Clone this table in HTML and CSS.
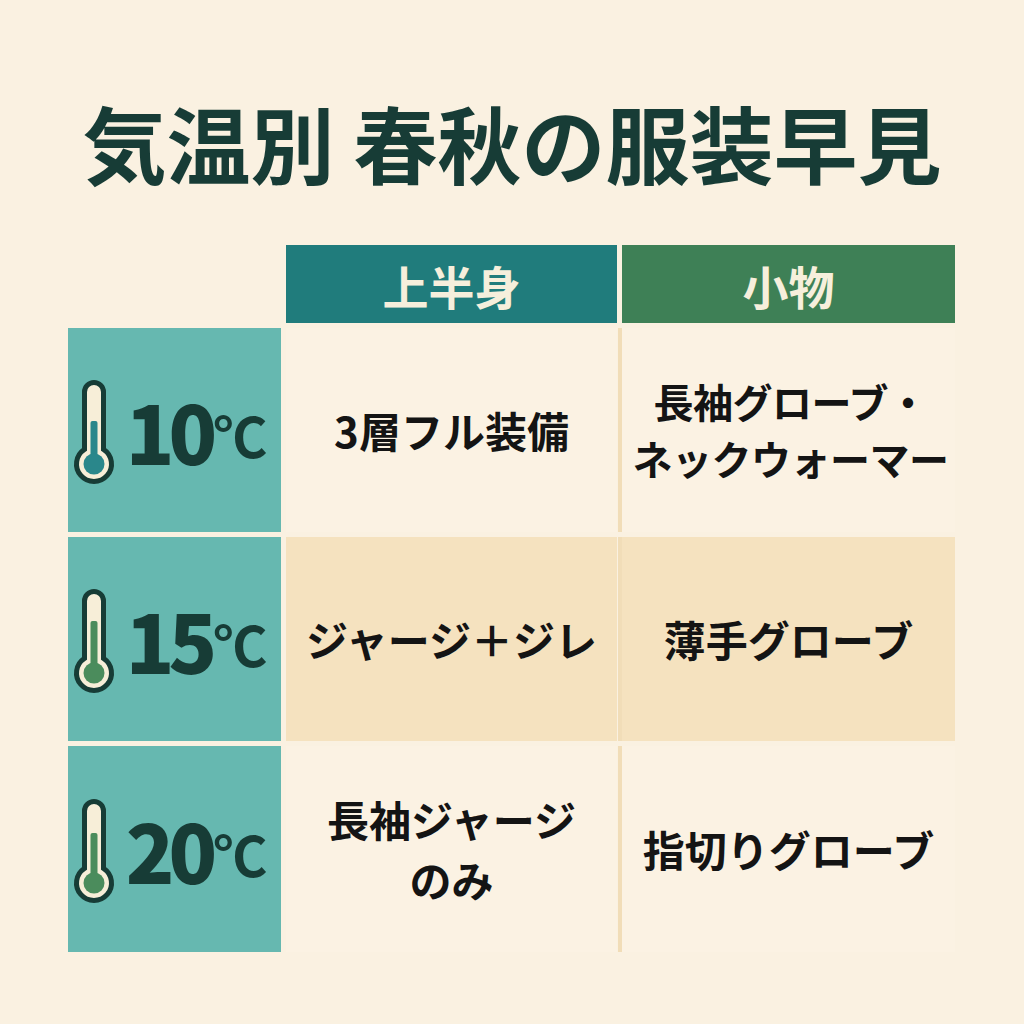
FILE: index.html
```html
<!DOCTYPE html>
<html lang="ja">
<head>
<meta charset="utf-8">
<title>気温別 春秋の服装早見</title>
<link rel="stylesheet" href="styles.css">
</head>
<body>
<main class="page">
  <h1 class="title">気温別 春秋の服装早見</h1>
  <div class="table">
    <div class="corner"></div>
    <div class="head head-teal">上半身</div>
    <div class="head head-green">小物</div>

    <div class="temp">
      <svg class="thermo" viewBox="0 0 44 104" width="44" height="104">
        <path class="thermo-body" d="M12.5,69.3 V12 A9.5,9.5 0 0 1 31.5,12 V69.3 A17.5,17.5 0 1 1 12.5,69.3 Z"/>
        <rect class="fill-teal" x="18.5" y="41" width="7" height="44" rx="2"/>
        <circle class="fill-teal" cx="22" cy="84" r="10.5"/>
      </svg>
      <span class="deg">10</span><span class="unit">℃</span>
    </div>
    <div class="cell">3層フル装備</div>
    <div class="cell cell-last cell-small">長袖グローブ・<br>ネックウォーマー</div>

    <div class="temp">
      <svg class="thermo" viewBox="0 0 44 104" width="44" height="104">
        <path class="thermo-body" d="M12.5,69.3 V12 A9.5,9.5 0 0 1 31.5,12 V69.3 A17.5,17.5 0 1 1 12.5,69.3 Z"/>
        <rect class="fill-green" x="18.5" y="32" width="7" height="53" rx="2"/>
        <circle class="fill-green" cx="22" cy="84" r="10.5"/>
      </svg>
      <span class="deg">15</span><span class="unit">℃</span>
    </div>
    <div class="cell cell-tan">ジャージ＋ジレ</div>
    <div class="cell cell-tan cell-last">薄手グローブ</div>

    <div class="temp">
      <svg class="thermo" viewBox="0 0 44 104" width="44" height="104">
        <path class="thermo-body" d="M12.5,69.3 V12 A9.5,9.5 0 0 1 31.5,12 V69.3 A17.5,17.5 0 1 1 12.5,69.3 Z"/>
        <rect class="fill-green" x="18.5" y="34" width="7" height="51" rx="2"/>
        <circle class="fill-green" cx="22" cy="84" r="10.5"/>
      </svg>
      <span class="deg">20</span><span class="unit">℃</span>
    </div>
    <div class="cell">長袖ジャージ<br>のみ</div>
    <div class="cell cell-last">指切りグローブ</div>
  </div>
</main>
</body>
</html>
```

FILE: styles.css
```css
* { box-sizing: border-box; }

html, body {
  margin: 0;
  padding: 0;
  background: #faf1e1;
}

body {
  font-family: "Noto Sans CJK JP", "Noto Sans", sans-serif;
  width: 1024px;
  height: 1024px;
  overflow: hidden;
}

.page {
  padding-top: 100px;
  display: flex;
  flex-direction: column;
  align-items: center;
}

.title {
  margin: 0;
  font-size: 84px;
  line-height: 84px;
  font-weight: 700;
  color: #173c36;
  white-space: nowrap;
}

.table {
  margin-top: 61px;
  display: grid;
  grid-template-columns: 213px 331px 333px;
  grid-template-rows: 78px 204px 204px 206px;
  gap: 5px;
  margin-left: -1px;
}

.head {
  display: flex;
  align-items: center;
  justify-content: center;
  font-size: 46px;
  font-weight: 700;
  color: #f6efdc;
  padding-top: 2px;
}

.head-teal { background: #207c7c; }
.head-green { background: #3e8056; }

.temp {
  background: #66b8b0;
  display: flex;
  align-items: center;
  justify-content: center;
  padding-right: 10px;
  color: #173c36;
}

.thermo {
  display: block;
  margin-right: 10px;
  margin-top: 4px;
}

.thermo-body {
  fill: #f7eed8;
  stroke: #173c36;
  stroke-width: 5;
}

.fill-teal { fill: #2a878b; }
.fill-green { fill: #4b8c5c; }

.deg {
  font-size: 80px;
  font-weight: 900;
  letter-spacing: -6px;
  line-height: 1;
}

.unit {
  font-size: 54px;
  font-weight: 700;
  line-height: 1;
  margin-left: 2px;
  margin-top: 10px;
}

.cell {
  background: #fbf2e3;
  display: flex;
  align-items: center;
  justify-content: center;
  text-align: center;
  font-size: 42px;
  line-height: 1.42;
  font-weight: 700;
  color: #141414;
  white-space: nowrap;
}

.cell-small {
  font-size: 40px;
  line-height: 1.43;
  letter-spacing: -0.5px;
  padding-left: 4px;
}

.cell-tan { background: #f5e2bf; }

.cell-last {
  box-shadow: -4px 0 0 #f1ddb8;
}
```
